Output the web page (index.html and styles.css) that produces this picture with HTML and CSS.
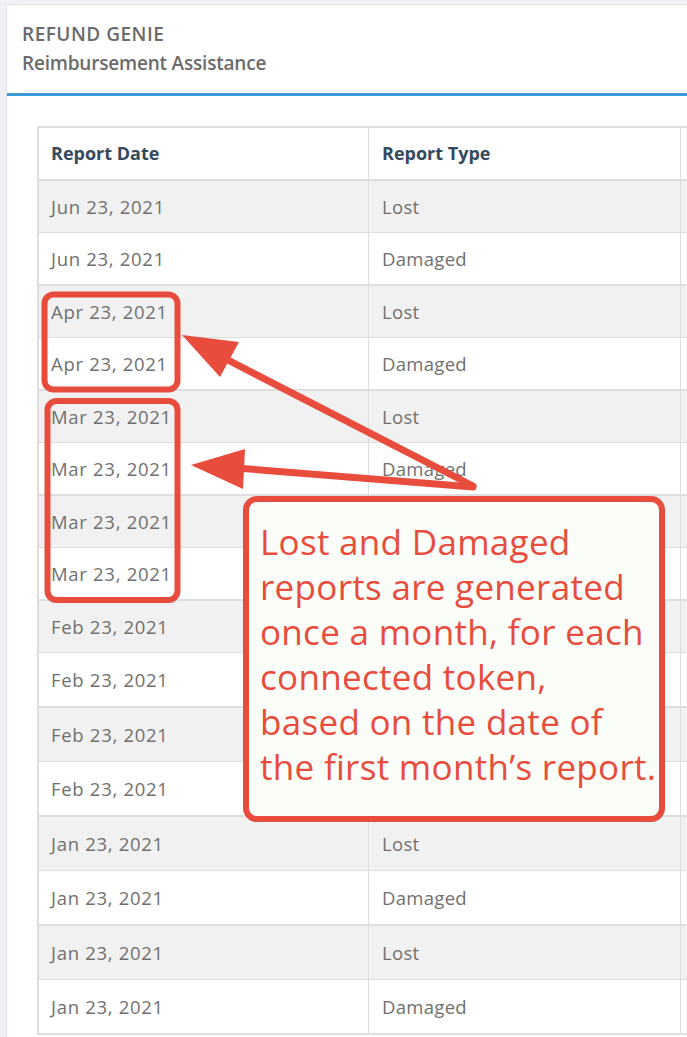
FILE: index.html
```html
<!DOCTYPE html>
<html lang="en">
<head>
<meta charset="utf-8">
<title>Refund Genie</title>
<link rel="stylesheet" href="styles.css">
</head>
<body>
<div class="card">
  <div class="card-header">
    <div class="title">REFUND GENIE</div>
    <div class="subtitle">Reimbursement Assistance</div>
  </div>
  <div class="card-body">
    <table class="reports">
      <colgroup><col class="c1"><col class="c2"><col class="c3"></colgroup>
      <thead>
        <tr><th>Report Date</th><th>Report Type</th><th></th></tr>
      </thead>
      <tbody>
        <tr class="odd"><td>Jun 23, 2021</td><td>Lost</td><td></td></tr>
        <tr class="even end"><td>Jun 23, 2021</td><td>Damaged</td><td></td></tr>
        <tr class="odd"><td>Apr 23, 2021</td><td>Lost</td><td></td></tr>
        <tr class="even end"><td>Apr 23, 2021</td><td>Damaged</td><td></td></tr>
        <tr class="odd"><td>Mar 23, 2021</td><td>Lost</td><td></td></tr>
        <tr class="even end"><td>Mar 23, 2021</td><td>Damaged</td><td></td></tr>
        <tr class="odd"><td>Mar 23, 2021</td><td>Lost</td><td></td></tr>
        <tr class="even end"><td>Mar 23, 2021</td><td>Damaged</td><td></td></tr>
        <tr class="odd"><td>Feb 23, 2021</td><td>Lost</td><td></td></tr>
        <tr class="even end tall"><td>Feb 23, 2021</td><td>Damaged</td><td></td></tr>
        <tr class="odd tall"><td>Feb 23, 2021</td><td>Lost</td><td></td></tr>
        <tr class="even end tall"><td>Feb 23, 2021</td><td>Damaged</td><td></td></tr>
        <tr class="odd tall"><td>Jan 23, 2021</td><td>Lost</td><td></td></tr>
        <tr class="even end tall"><td>Jan 23, 2021</td><td>Damaged</td><td></td></tr>
        <tr class="odd tall"><td>Jan 23, 2021</td><td>Lost</td><td></td></tr>
        <tr class="even end tall"><td>Jan 23, 2021</td><td>Damaged</td><td></td></tr>
      </tbody>
    </table>
  </div>
</div>

<svg class="annotations" width="687" height="1037" viewBox="0 0 687 1037" xmlns="http://www.w3.org/2000/svg">
  <rect x="44.5" y="294.5" width="133" height="95" rx="9" ry="9" fill="none" stroke="#e74c3c" stroke-width="6"/>
  <rect x="47.5" y="401" width="130" height="199" rx="9" ry="9" fill="none" stroke="#e74c3c" stroke-width="6"/>
  <line x1="473" y1="486" x2="222" y2="357" stroke="#e74c3c" stroke-width="7" stroke-linecap="round"/>
  <polygon points="182,335 239,342 220,377" fill="#e74c3c"/>
  <line x1="473" y1="487" x2="236" y2="468" stroke="#e74c3c" stroke-width="7" stroke-linecap="round"/>
  <polygon points="191,465 245,449 243,489" fill="#e74c3c"/>
</svg>

<div class="callout">Lost and Damaged<br>reports are generated<br>once a month, for each<br>connected token,<br>based on the date of<br>the first month’s report.</div>
</body>
</html>
```

FILE: styles.css
```css
html, body {
  margin: 0;
  padding: 0;
  overflow: hidden;
}

body {
  background: #f0f1f5;
  padding: 4px 0 0 6px;
  font-family: "Open Sans", "Noto Sans", sans-serif;
  height: 1037px;
  box-sizing: border-box;
}

.card {
  background: #ffffff;
  border: 1px solid #e1e3e9;
  border-right: none;
  min-height: 1100px;
}

.card-header {
  padding: 15px 15px 15px;
  border-bottom: 3px solid #3a98d8;
  color: #6b6b6b;
  font-weight: 600;
  font-size: 19px;
  line-height: 29px;
}

.title {
  letter-spacing: 0.5px;
}

.subtitle {
  letter-spacing: -0.2px;
}

.card-body {
  padding: 30px 0 0 30px;
}

.reports {
  border-collapse: separate;
  border-spacing: 0;
  border-top: 2px solid #dedede;
  border-left: 2px solid #dedede;
  table-layout: fixed;
  width: 842px;
}

.c1 { width: 330px; }
.c2 { width: 312px; }
.c3 { width: 200px; }

.reports th,
.reports td {
  text-align: left;
  padding: 0 0 0 13px;
  border-right: 1px solid #dedede;
  white-space: nowrap;
}

.reports th {
  height: 51px;
  line-height: 51px;
  font-size: 18px;
  font-weight: 700;
  color: #34495e;
  border-bottom: 2px solid #dedede;
  background: #ffffff;
}

.reports td {
  line-height: 51px;
  height: 51px;
  font-size: 18.5px;
  letter-spacing: 0.3px;
  color: #707070;
  border-bottom: 1px solid #dedede;
}

.reports td:first-child,
.reports th:first-child {
  padding-left: 12px;
}

.reports td:first-child {
  letter-spacing: 0.7px;
}

.reports tr.odd td { background: #f1f1f1; }
.reports tr.even td { background: #ffffff; }
.reports tr.end td { border-bottom: 2px solid #dedede; }
.reports tr.tall td { line-height: 53px; height: 53px; }

.annotations {
  position: absolute;
  left: 0;
  top: 0;
  pointer-events: none;
}

.callout {
  position: absolute;
  left: 243px;
  top: 496px;
  width: 422px;
  height: 326px;
  box-sizing: border-box;
  border: 6px solid #e74c3c;
  border-radius: 14px;
  background: #fbfdf8;
  color: #e74c3c;
  font-family: "Open Sans", "Noto Sans", sans-serif;
  font-size: 35px;
  letter-spacing: 0.3px;
  line-height: 45px;
  padding: 17px 0 0 11px;
  white-space: nowrap;
}
```
